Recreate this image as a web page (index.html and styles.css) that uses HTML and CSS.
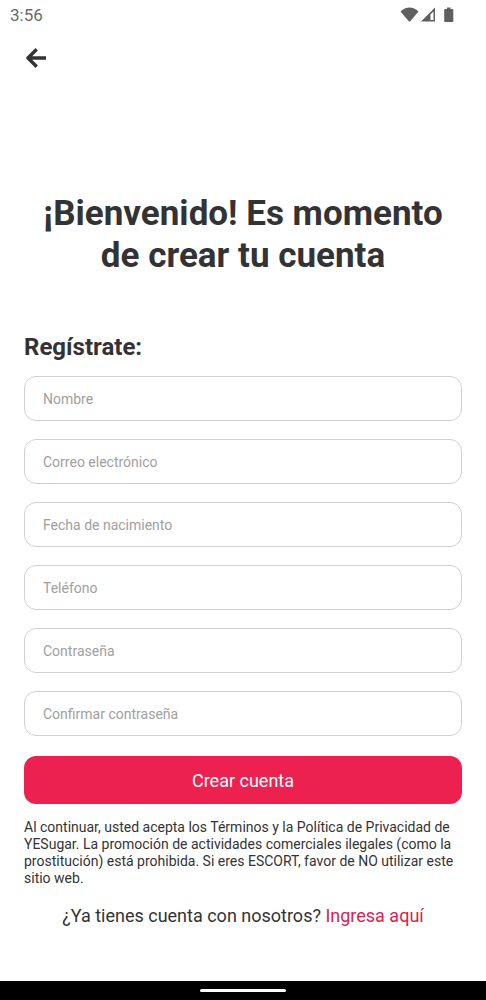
FILE: index.html
```html
<!DOCTYPE html>
<html lang="es">
<head>
<meta charset="utf-8">
<meta name="viewport" content="width=device-width, initial-scale=1">
<title>Crear cuenta</title>
<link rel="stylesheet" href="styles.css">
</head>
<body>
<div class="screen">
  <header class="status">
    <span>3:56</span>
    <span class="status-icons">
      <svg width="20" height="16" viewBox="0 0 20 16" aria-hidden="true"><path d="M.5 4.500C6-.8 13-.8 18.500 4.500L10.200 14.300Q9.500 15 8.800 14.300Z" fill="#5f5f5f"/></svg>
      <svg width="16" height="16" viewBox="0 0 16 16" aria-hidden="true"><path d="M15 .5V14.500H1Z" fill="#5f5f5f"/><path d="M13.500 4.500V13H10.500V7.500Z" fill="#fff"/></svg>
      <svg class="battery" width="10" height="16" viewBox="0 0 10 16" aria-hidden="true"><path d="M3 .5h3.500V2H8.500q.8 0 .8.800v11.500q0 .8-.8.800H1q-.8 0-.8-.8V2.800Q.200 2 1 2h2Z" fill="#5f5f5f"/></svg>
    </span>
  </header>
  <nav class="nav">
    <button class="back" type="button" aria-label="Volver">
      <svg width="20" height="20" viewBox="0 0 20 20" aria-hidden="true"><path d="M9.500 2.500L2 10l7.500 7.500M2.500 10H19" fill="none" stroke="#333335" stroke-width="3.400" stroke-linejoin="round" stroke-linecap="square"/></svg>
    </button>
  </nav>
  <main class="content">
    <h1 class="title">¡Bienvenido! Es momento de crear tu cuenta</h1>
    <form class="form">
      <h2 class="subtitle">Regístrate:</h2>
      <input class="field" type="text" placeholder="Nombre" aria-label="Nombre">
      <input class="field" type="email" placeholder="Correo electrónico" aria-label="Correo electrónico">
      <input class="field" type="text" placeholder="Fecha de nacimiento" aria-label="Fecha de nacimiento">
      <input class="field" type="tel" placeholder="Teléfono" aria-label="Teléfono">
      <input class="field" type="password" placeholder="Contraseña" aria-label="Contraseña">
      <input class="field" type="password" placeholder="Confirmar contraseña" aria-label="Confirmar contraseña">
      <button class="submit" type="submit">Crear cuenta</button>
    </form>
    <p class="terms">Al continuar, usted acepta los Términos y la Política de Privacidad de YESugar. La promoción de actividades comerciales ilegales (como la prostitución) está prohibida. Si eres ESCORT, favor de NO utilizar este sitio web.</p>
    <p class="login">¿Ya tienes cuenta con nosotros? <a class="login-link" href="#">Ingresa aquí</a></p>
  </main>
  <footer class="gesture"><span class="handle"></span></footer>
</div>
</body>
</html>
```
FILE: styles.css
```css
* { box-sizing: border-box; }
body {
  margin: 0;
  background: #fff;
  color: #333335;
  font-family: Roboto, sans-serif;
}
.screen { display: flex; flex-direction: column; min-height: 100vh; }
.status {
  display: flex;
  justify-content: space-between;
  align-items: center;
  height: 30px;
  padding: 0 32px 0 10px;
  color: #6a6a6a;
  font-size: 17px;
}
.status-icons { display: flex; align-items: center; }
.battery { margin-left: 8px; }
.nav { padding: 16px 24px 0; }
.back { display: flex; padding: 2px; border: 0; background: none; cursor: pointer; }
.content { flex: 1; padding: 123px 24px 24px; }
.title { margin: 0; font-size: 35px; line-height: 42px; font-weight: 700; text-align: center; }
.form { display: flex; flex-direction: column; gap: 18px; margin-top: 55px; }
.subtitle { margin: 0 0 -4px; font-size: 24px; line-height: 30px; font-weight: 700; }
.field {
  width: 100%;
  height: 45px;
  padding: 0 18px;
  border: 1px solid #d0d0d0;
  border-radius: 12px;
  background: #fff;
  color: inherit;
  font: 14px Roboto, sans-serif;
}
.field::placeholder { color: #a0a0a0; opacity: 1; }
.submit {
  height: 48px;
  margin-top: 2px;
  border: 0;
  border-radius: 12px;
  background: #ed214f;
  color: #fff;
  font: 18px Roboto, sans-serif;
  cursor: pointer;
}
.terms { margin: 15px 0 0; font-size: 14px; line-height: 17px; }
.login { margin: 18px 0 0; font-size: 18px; line-height: 22px; text-align: center; }
.login-link { color: #d81e50; text-decoration: none; }
.gesture { display: flex; align-items: center; justify-content: center; height: 19px; background: #000; }
.handle { width: 86px; height: 3px; border-radius: 2px; background: #fff; }
```
